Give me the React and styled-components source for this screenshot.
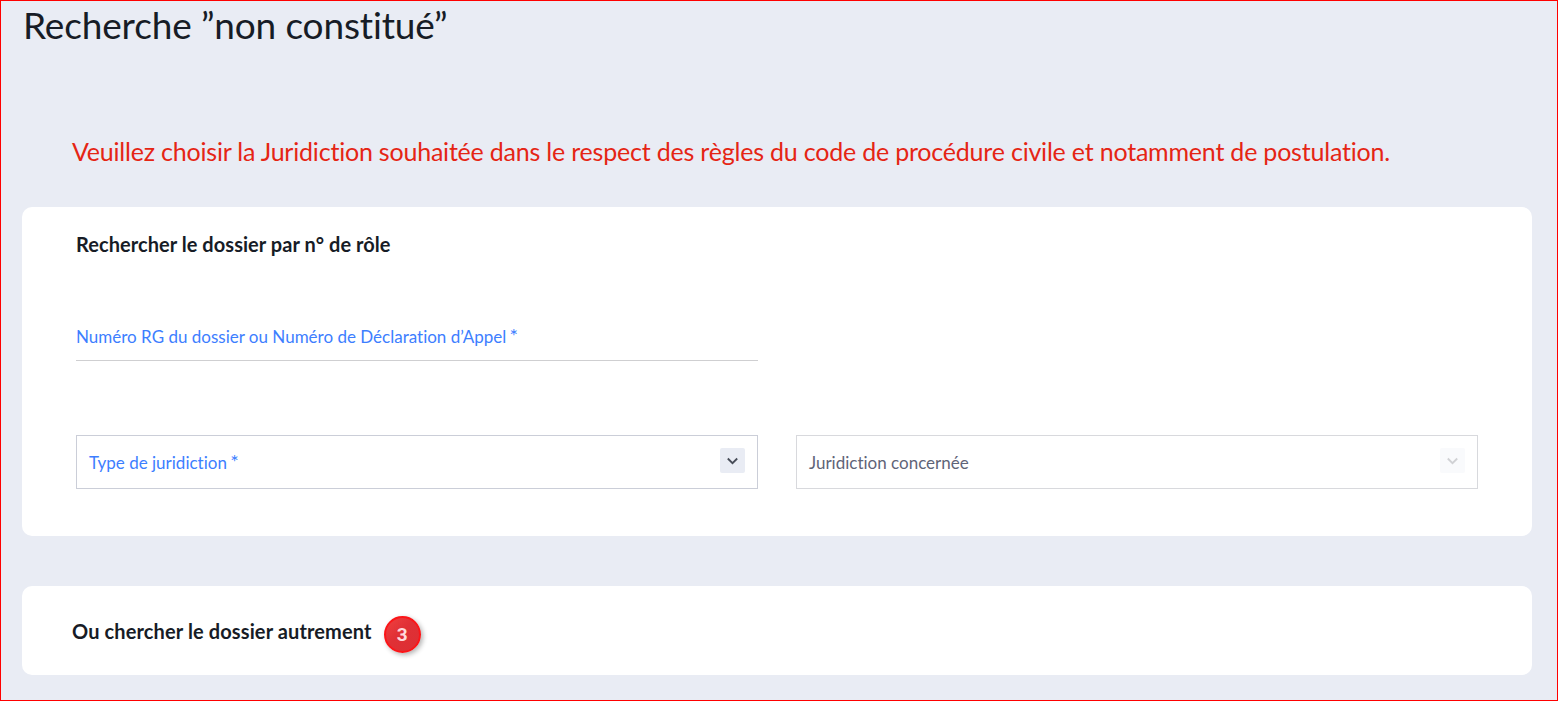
import styled, { createGlobalStyle } from "styled-components"

const GlobalStyle = createGlobalStyle`
  * {
    box-sizing: border-box;
  }

  body {
    margin: 0;
    background: #e9ecf4;
    color: #171c26;
    font-family: Lato, "Noto Sans", sans-serif;
    font-variant-ligatures: none;
  }
`

const Page = styled.main`
  display: flex;
  flex-direction: column;
  height: 701px;
  padding: 0 25px 0 21px;
  border: 1px solid #f00;
  overflow: hidden;
`

const Title = styled.h1`
  flex-shrink: 0;
  height: 50px;
  margin: 0 0 75px 1px;
  font-size: 37px;
  font-weight: 400;
  letter-spacing: -0.15px;
  line-height: 48px;
  white-space: nowrap;
`

const Warning = styled.p`
  flex-shrink: 0;
  height: 50px;
  margin: 0 0 31px 50px;
  color: #e52514;
  font-size: 25px;
  letter-spacing: -0.206px;
  line-height: 50px;
  white-space: nowrap;
`

const Card = styled.section`
  flex-shrink: 0;
  height: ${ ({height}) => height };
  margin-bottom: 50px;
  padding: ${ ({padding}) => padding };
  border-radius: 10px;
  background: #fff;
`

const CardTitle = styled.h2`
  margin: 0;
  font-size: 20px;
  font-weight: 700;
  letter-spacing: ${ ({spacing}) => spacing || "0.05px" };
  line-height: 30px;
  white-space: nowrap;
`

const Row = styled.div`
  display: grid;
  grid-template-columns: 682px 682px;
  column-gap: 38px;
`

const TextField = styled.label`
  height: 52px;
  margin: 50px 0 74px;
  padding-top: 13px;
  border-bottom: 1px solid #cfcfd1;
  color: #3d7eff;
  font-size: 17px;
  line-height: 30px;
  white-space: nowrap;
`

const Select = styled.div`
  display: flex;
  justify-content: space-between;
  height: 54px;
  padding: 12px;
  border: 1px solid ${ ({disabled}) => disabled ? "#d8d9dd" : "#cbced8" };
  color: ${ ({disabled}) => disabled ? "#5f6478" : "#3d7eff" };
  font-size: 17px;
  line-height: 30px;
  white-space: nowrap;
`

const Required = styled.span`
  font-size: 20px;
  line-height: 1;
  margin-left: -1px;
`

const Toggle = styled.span`
  display: flex;
  align-items: center;
  justify-content: center;
  width: 25px;
  height: 25px;
  border-radius: 2px;
  background: #e9ecf4;
  color: #474c58;
  opacity: ${ ({disabled}) => disabled ? 0.25 : 1 };
`

const Heading = styled.div`
  display: flex;
  align-items: flex-start;
  gap: 12px;
`

const Badge = styled.span`
  display: flex;
  align-items: center;
  justify-content: center;
  width: 37px;
  height: 37px;
  border: 2px solid #fb1518;
  border-radius: 50%;
  background: linear-gradient(135deg, #f04040, #e03035 45%, #dc2f34);
  box-shadow: 2px 2px 5px rgba(0, 0, 0, 0.3);
  color: #ffd9dc;
  font-family: Roboto, sans-serif;
  font-size: 19px;
  font-weight: 700;
  line-height: 1;
`

function Chevron() {
  return (
    <svg width="11" height="8" viewBox="0 0 11 8" fill="none">
      <path d="M0.8 1.5 5.5 6.2 10.2 1.5" stroke="currentColor" strokeWidth="1.8" />
    </svg>
  )
}

function SelectField({ label, required, disabled }) {
  return (
    <Select disabled={disabled}>
      <span>{label}{required && <> <Required>*</Required></>}</span>
      <Toggle disabled={disabled}><Chevron /></Toggle>
    </Select>
  )
}

function App() {
  return (
    <>
      <GlobalStyle />
      <Page>
        <Title>Recherche ”non constitué”</Title>
        <Warning>
          Veuillez choisir la Juridiction souhaitée dans le respect des règles du code de procédure civile et notamment de postulation.
        </Warning>
        <Card height="329px" padding="22px 54px 0">
          <CardTitle>Rechercher le dossier par n° de rôle</CardTitle>
          <Row>
            <TextField>Numéro RG du dossier ou Numéro de Déclaration d’Appel <Required>*</Required></TextField>
          </Row>
          <Row>
            <SelectField label="Type de juridiction" required />
            <SelectField label="Juridiction concernée" disabled />
          </Row>
        </Card>
        <Card height="89px" padding="30px 50px 0">
          <Heading>
            <CardTitle spacing="0.12px">Ou chercher le dossier autrement</CardTitle>
            <Badge>3</Badge>
          </Heading>
        </Card>
      </Page>
    </>
  )
}

export default App
